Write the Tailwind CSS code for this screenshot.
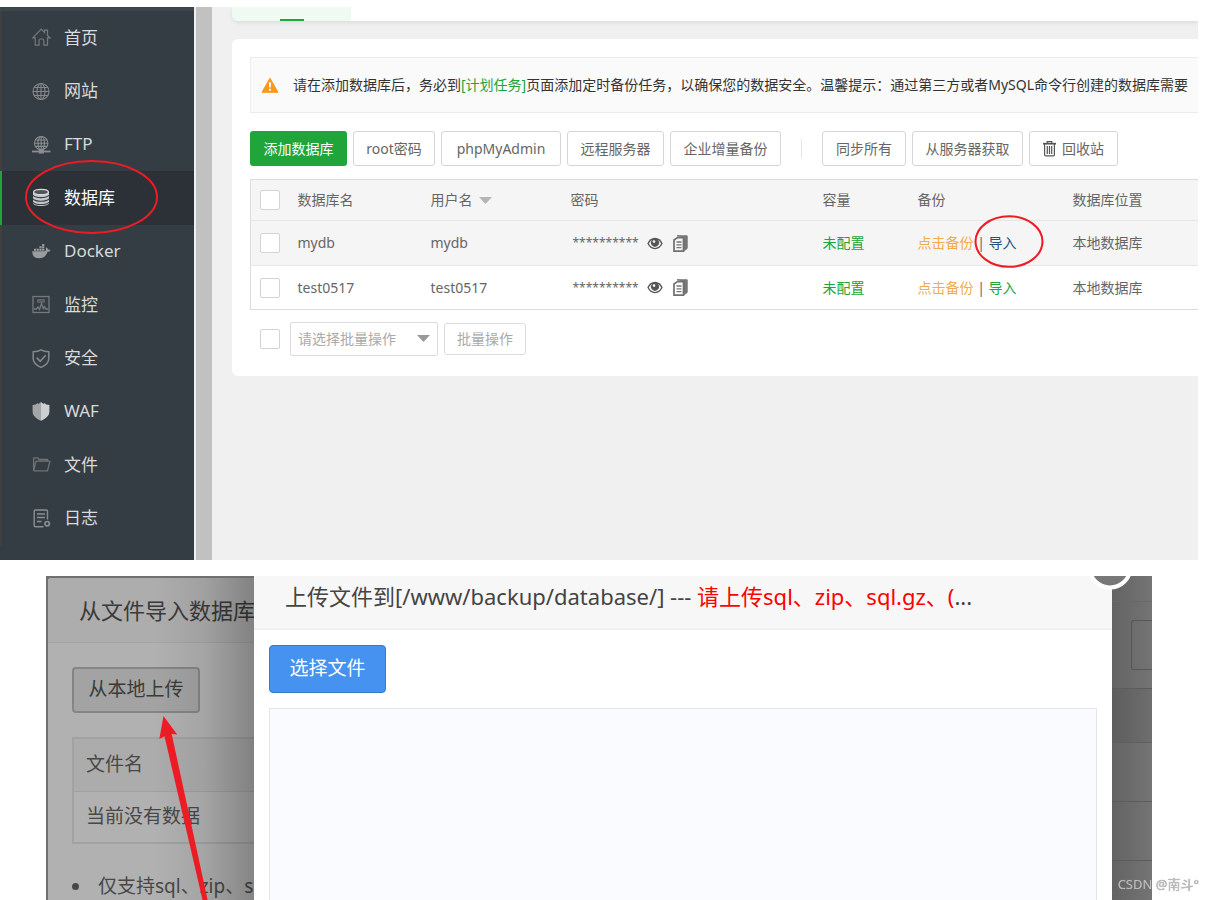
<!DOCTYPE html>
<html lang="zh-CN">
<head>
<meta charset="utf-8">
<meta name="viewport" content="width=device-width, initial-scale=1">
<title>数据库</title>
<script src="https://cdn.jsdelivr.net/npm/@tailwindcss/browser@4"></script>
</head>
<body class="bg-white font-['Noto_Sans','Noto_Sans_CJK_SC',sans-serif] text-sm text-[#666]">
<main class="flex h-screen flex-col overflow-hidden pt-[7px]">

  <!-- Panel -->
  <section class="mr-[15px] flex overflow-hidden bg-[#f0f0f0]">
    <nav class="w-[194px] shrink-0 border-t-4 border-[#3b454c] bg-[#353d44] pb-[15px] text-[17px] text-[#d8dadb]" aria-label="主菜单">
      <ul class="grid h-[534px] auto-rows-fr">
        <li class="border-l-2 border-[#423f3f]"><a href="#" class="flex h-full items-center gap-[13px] pl-[30px]">
          <svg class="size-[19px] text-[#75797c]" viewBox="0 0 19 19" fill="none" stroke="currentColor" stroke-width="1.2"><path d="M.8 9.8 9.2 1.2l3.3 3.4V2.2h3v5.3l2.4 2.3H15.500v7.400h-3.700v-4.700c0-1-.6-1.500-1.500-1.500H8.500c-1 0-1.500.5-1.500 1.500v4.700H3.200V9.800z"/></svg>首页</a></li>
        <li class="border-l-2 border-[#423f3f]"><a href="#" class="flex h-full items-center gap-[13px] pl-[30px]">
          <svg class="size-[19px] text-[#85888a]" viewBox="0 0 19 19" fill="none" stroke="currentColor" stroke-width="1.100"><circle cx="9" cy="9.500" r="8"/><ellipse cx="9" cy="9.500" rx="4" ry="8"/><path d="M9 1.500v16M1 9.500h16M2.200 5.500h13.600M2.200 13.500h13.600"/></svg>网站</a></li>
        <li class="border-l-2 border-[#423f3f]"><a href="#" class="flex h-full items-center gap-[13px] pl-[30px]">
          <svg class="size-[19px] text-[#8b8e90]" viewBox="0 0 19 19" fill="none" stroke="currentColor" stroke-width="1.100"><circle cx="9.200" cy="8.200" r="6.700"/><ellipse cx="9.200" cy="8.200" rx="3.200" ry="6.700"/><path d="M9.200 1.500v13M2.500 8.200h13.400M3.500 5h11.400M3.500 11.400h11.400"/><path d="M0 16.500h18.500" stroke-width="1.800"/><rect x="7.300" y="15" width="4" height="3" fill="currentColor"/></svg>FTP</a></li>
        <li class="relative border-l-2 border-[#20a53a] bg-[#2c3138] text-white"><a href="#" aria-current="page" class="flex h-full items-center gap-[13px] pl-[30px]">
          <svg class="size-[19px]" viewBox="0 0 19 19"><path d="M1 4v11c0 1.800 3.600 3 8 3s8-1.200 8-3V4z" fill="#c4c6c8"/><ellipse cx="9" cy="4" rx="7.400" ry="2.700" fill="#50555b" stroke="#d9dadc" stroke-width="1.300"/><path d="M1 7.400c1.500 1.500 4.500 2.200 8 2.200s6.500-.7 8-2.200M1 11c1.500 1.500 4.500 2.200 8 2.200s6.500-.7 8-2.200M1 14.300c1.500 1.500 4.500 2.200 8 2.200s6.500-.7 8-2.200" fill="none" stroke="#3d4249" stroke-width="1.100"/></svg>数据库</a>
          <svg class="pointer-events-none absolute -top-[11px] left-[23px] h-[74px] w-[134px]" viewBox="0 0 134 74" fill="none"><ellipse cx="66.500" cy="37" rx="65.500" ry="36" stroke="#ed1c24" stroke-width="2"/></svg></li>
        <li class="border-l-2 border-[#423f3f]"><a href="#" class="flex h-full items-center gap-[13px] pl-[30px]">
          <svg class="size-[19px] text-[#9a9c9e]" viewBox="0 0 19 19" fill="currentColor"><path d="M.3 9.300h12.400c1-.1 1.400-.7 1.200-1.700-.2-.9 0-1.700.7-2.300.9.700 1.300 1.400 1.300 2.200 1-.2 1.900 0 2.600.5-.5 1.300-1.500 1.800-3 1.800-1.200 4.200-4 6.500-8.300 6.500C2.500 16.300.2 14 .3 9.300zM2 6.700h2.200v2H2zM4.700 6.700h2.200v2H4.700zM7.400 6.700h2.200v2H7.400zM10.100 6.700h2.200v2h-2.200zM7.400 4.300h2.200v2H7.400zM10.100 4.300h2.200v2h-2.200zM10.100 2h2.200v1.900h-2.200z"/></svg>Docker</a></li>
        <li class="border-l-2 border-[#423f3f]"><a href="#" class="flex h-full items-center gap-[13px] pl-[30px]">
          <svg class="size-[19px] text-[#75797c]" viewBox="0 0 19 19" fill="none" stroke="currentColor" stroke-width="1.300"><rect x="1" y="1.500" width="16" height="16"/><path d="M5.500 4.500h7v2.800h-7z" fill="currentColor" fill-opacity=".5" stroke-width=".6"/><path d="M2 14h2.500l1.500-2 1.500 2.500 2-6 1.700 5 1.300-2 1.200 2.500H16"/></svg>监控</a></li>
        <li class="border-l-2 border-[#423f3f]"><a href="#" class="flex h-full items-center gap-[13px] pl-[30px]">
          <svg class="size-[19px] text-[#85888a]" viewBox="0 0 19 19" fill="none" stroke="currentColor" stroke-width="1.500"><path d="M9 .8c2 1.300 4.700 1.900 7.800 2v6.700c0 4-2.800 6.800-7.800 8.900-5-2.100-7.800-4.900-7.800-8.900V2.800c3.100-.1 5.800-.7 7.800-2z"/><path d="m4.700 8.700 3.500 3.600 5.500-6" stroke-width="1.700"/></svg>安全</a></li>
        <li class="border-l-2 border-[#423f3f]"><a href="#" class="flex h-full items-center gap-[13px] pl-[30px]">
          <svg class="size-[19px]" viewBox="0 0 19 19"><path d="M9 0 6.800 1.800 5.200 1.300 3.700 2.600.6 2.900v6.600c0 4.200 3.400 7 8.400 9.300z" fill="#a3a5a7"/><path d="m9 0 2.200 1.800 1.600-.5 1.500 1.300 3.100.3v6.600c0 4.200-3.400 7-8.400 9.300z" fill="#cdcfd0"/></svg>WAF</a></li>
        <li class="border-l-2 border-[#423f3f]"><a href="#" class="flex h-full items-center gap-[13px] pl-[30px]">
          <svg class="size-[19px] text-[#6f7376]" viewBox="0 0 19 19" fill="none" stroke="currentColor" stroke-width="1.300" stroke-linejoin="round"><path d="M1.600 16V2.800h4l1.600 1.700h8.300v1.700M1.600 16 4 6.200h13.900l-2.400 9.600H1.600"/></svg>文件</a></li>
        <li class="border-l-2 border-[#423f3f]"><a href="#" class="flex h-full items-center gap-[13px] pl-[30px]">
          <svg class="size-[19px] text-[#8b8e90]" viewBox="0 0 19 19" fill="none" stroke="currentColor" stroke-width="1.400" stroke-linejoin="round"><path d="M11.500 17.800H3.500c-.8 0-1.300-.5-1.300-1.300V2.300c0-.8.500-1.300 1.300-1.300h10.700c.8 0 1.300.5 1.300 1.300v8.200M5 5h8M5 8.500h8M5 12.500h4.500"/><circle cx="15.200" cy="14.700" r="2.200" stroke-width="1.700"/></svg>日志</a></li>
      </ul>
    </nav>
    <div class="w-0.5 shrink-0 bg-[#f0f0f0]"></div>
    <div class="w-4 shrink-0 bg-[#c1c1c1]"></div>

    <div class="min-w-0 flex-1 pl-5">
      <div class="h-[14px] rounded-bl-md bg-white shadow-[0_2px_4px_#00000014]">
        <div class="flex h-full w-[119px] items-end justify-center rounded-bl-md bg-[#effaf2]"><span class="h-0.5 w-6 bg-[#20a53a]"></span></div>
      </div>

      <div class="mt-[18px] rounded-l-md bg-white pb-5 pl-[18px] pt-[18px]">
        <div class="flex h-14 items-center gap-[14px] overflow-hidden whitespace-nowrap border border-r-0 border-[#ececec] bg-[#fafafa] pl-[10px] text-[#333]">
          <svg class="h-[17px] w-[18px] shrink-0" viewBox="0 0 18 17"><path d="M9 1.200 17 15.300H1z" fill="#f8981d" stroke="#f8981d" stroke-linejoin="round"/><path d="M7.800 5.500h2.400l-.5 5H8.300zM8 11.800h2v2H8z" fill="#fff"/></svg>
          <p>请在添加数据库后，务必到<a href="#" class="text-[#20a53a]">[计划任务]</a>页面添加定时备份任务，以确保您的数据安全。温馨提示：通过第三方或者MySQL命令行创建的数据库需要</p>
        </div>

        <div class="mt-[18px] flex items-center gap-1.5 whitespace-nowrap">
          <button class="h-[35px] w-[97px] rounded-[3px] bg-[#20a53a] text-white">添加数据库</button>
          <button class="h-[35px] w-[82px] rounded-[3px] border border-[#d6d6d6]">root密码</button>
          <button class="h-[35px] w-[120px] rounded-[3px] border border-[#d6d6d6]">phpMyAdmin</button>
          <button class="h-[35px] w-[97px] rounded-[3px] border border-[#d6d6d6]">远程服务器</button>
          <button class="h-[35px] w-[111px] rounded-[3px] border border-[#d6d6d6]">企业增量备份</button>
          <span class="mx-[14px] h-[19px] w-px bg-[#e6e6e6]"></span>
          <button class="h-[35px] w-[84px] rounded-[3px] border border-[#d6d6d6]">同步所有</button>
          <button class="h-[35px] w-[111px] rounded-[3px] border border-[#d6d6d6]">从服务器获取</button>
          <button class="flex h-[35px] w-[89px] items-center justify-center gap-1.5 rounded-[3px] border border-[#d6d6d6]">
            <svg class="h-4 w-[13px]" viewBox="0 0 13 16" fill="none" stroke="#555" stroke-width="1.200"><path d="M0 2.700h13" stroke-width="1.700"/><path d="M4.200 2.300V.6h4.600v1.700M1.600 3v10.700c0 .7.400 1.100 1.100 1.100h7.600c.7 0 1.100-.4 1.100-1.100V3M4.300 5v8M6.500 5v8M8.700 5v8"/></svg>回收站</button>
        </div>

        <table class="mt-[13px] w-full table-fixed border-b border-l border-t border-[#dcdcdc] text-left">
          <colgroup><col class="w-[47px]"><col class="w-[133px]"><col class="w-[140px]"><col class="w-[252px]"><col class="w-[95px]"><col class="w-[155px]"><col></colgroup>
          <thead>
            <tr class="h-[41px] border-b border-[#e6e6e6] bg-[#f5f5f5]">
              <th class="pl-[9px]"><input type="checkbox" aria-label="全选" class="block size-5 appearance-none rounded-[2px] border border-[#d4d4d4] bg-white"></th>
              <th class="font-normal">数据库名</th>
              <th class="font-normal"><span class="flex items-center gap-1.5">用户名<svg class="h-[7px] w-[13px]" viewBox="0 0 13 7"><path d="M0 0h13L6.500 7z" fill="#b5b5b5"/></svg></span></th>
              <th class="font-normal">密码</th>
              <th class="font-normal">容量</th>
              <th class="font-normal">备份</th>
              <th class="font-normal">数据库位置</th>
            </tr>
          </thead>
          <tbody>
            <tr class="h-[45px] border-b border-[#e6e6e6] bg-[#f5f5f5]">
              <td class="pl-[9px]"><input type="checkbox" aria-label="选择 mydb" class="block size-5 appearance-none rounded-[2px] border border-[#d4d4d4] bg-white"></td>
              <td>mydb</td>
              <td>mydb</td>
              <td><div class="flex items-center gap-2.5 pl-0.5"><span class="w-[64px] text-xs">**********</span>
                <button aria-label="显示密码"><svg class="block h-[13px] w-4" viewBox="0 0 16 13"><path d="M8 .8c3.500 0 6 2.200 7.700 5.700C14 10 11.500 12.200 8 12.200S2 10 .3 6.500C2 3 4.500.8 8 .8z" fill="#555"/><path d="M1.800 6.500c.9-1.700 2-2.900 3.300-3.600a4 4 0 1 0 5.800 0c1.300.7 2.400 1.900 3.300 3.600-1.500 2.900-3.600 4.400-6.200 4.400S3.300 9.400 1.800 6.500z" fill="#f5f5f5"/><circle cx="7" cy="4.600" r="1.300" fill="#f5f5f5"/></svg></button>
                <button aria-label="复制密码"><svg class="block h-[17px] w-[15px]" viewBox="0 0 15 17"><path d="M4 .8h10.200v12.700l-2.700 2V3L11 1.800z" fill="#777" stroke="#777"/><path d="M4.500 2.600 1 5v11.200h9.500V2.600z" fill="#f5f5f5" stroke="#707070" stroke-width="1.700"/><path d="M3.500 7h5M3.500 9.800h5M3.500 12.600h5" stroke="#777" stroke-width="1.300"/></svg></button></div></td>
              <td><a href="#" class="text-[#20a53a]">未配置</a></td>
              <td><div class="relative"><a href="#" class="text-[#f0ad4e]">点击备份</a> | <a href="#" class="text-[#23527c]">导入</a>
                <svg class="pointer-events-none absolute -top-[18px] left-[56px] h-[53px] w-[70px]" viewBox="0 0 70 53" fill="none"><ellipse cx="35" cy="26.500" rx="33.500" ry="25.300" stroke="#ed1c24" stroke-width="2"/></svg></div></td>
              <td>本地数据库</td>
            </tr>
            <tr class="h-[44px]">
              <td class="pl-[9px]"><input type="checkbox" aria-label="选择 test0517" class="block size-5 appearance-none rounded-[2px] border border-[#d4d4d4] bg-white"></td>
              <td>test0517</td>
              <td>test0517</td>
              <td><div class="flex items-center gap-2.5 pl-0.5"><span class="w-[64px] text-xs">**********</span>
                <button aria-label="显示密码"><svg class="block h-[13px] w-4" viewBox="0 0 16 13"><path d="M8 .8c3.500 0 6 2.200 7.700 5.700C14 10 11.500 12.200 8 12.200S2 10 .3 6.500C2 3 4.500.8 8 .8z" fill="#555"/><path d="M1.800 6.500c.9-1.700 2-2.900 3.300-3.600a4 4 0 1 0 5.800 0c1.300.7 2.400 1.900 3.300 3.600-1.500 2.900-3.600 4.400-6.200 4.400S3.300 9.400 1.800 6.500z" fill="#fff"/><circle cx="7" cy="4.600" r="1.300" fill="#fff"/></svg></button>
                <button aria-label="复制密码"><svg class="block h-[17px] w-[15px]" viewBox="0 0 15 17"><path d="M4 .8h10.200v12.700l-2.700 2V3L11 1.800z" fill="#777" stroke="#777"/><path d="M4.500 2.600 1 5v11.200h9.500V2.600z" fill="#fff" stroke="#707070" stroke-width="1.700"/><path d="M3.500 7h5M3.500 9.800h5M3.500 12.600h5" stroke="#777" stroke-width="1.300"/></svg></button></div></td>
              <td><a href="#" class="text-[#20a53a]">未配置</a></td>
              <td><a href="#" class="text-[#f0ad4e]">点击备份</a> | <a href="#" class="text-[#20a53a]">导入</a></td>
              <td>本地数据库</td>
            </tr>
          </tbody>
        </table>

        <div class="mt-3 flex items-center pl-2.5 text-[#aaa]">
          <input type="checkbox" aria-label="全选" class="size-5 appearance-none rounded-[2px] border border-[#d4d4d4] bg-white">
          <div class="relative ml-2.5">
            <select aria-label="批量操作" class="block h-[34px] w-[148px] appearance-none rounded-[2px] border border-[#dcdcdc] bg-white pl-[7px]"><option>请选择批量操作</option></select>
            <svg class="pointer-events-none absolute right-2 top-[13px] h-[7px] w-[13px]" viewBox="0 0 13 7"><path d="M0 0h13L6.500 7z" fill="#999"/></svg>
          </div>
          <button class="ml-1.5 h-8 w-[82px] rounded-[3px] border border-[#dcdcdc]">批量操作</button>
        </div>
      </div>
    </div>
  </section>

  <!-- Upload dialog over the import dialog -->
  <section class="relative ml-[46px] mr-[61px] mt-4 flex min-h-0 flex-1 overflow-hidden bg-[#707070]">
    <div class="relative ml-0.5 mt-0.5 w-[206px] shrink-0 overflow-hidden whitespace-nowrap rounded-tl-[3px] bg-[#b1b1b1] text-[19px] text-[#484848]">
      <h2 class="flex h-[65px] items-center border-b border-[#a4a4a4] bg-[#adadad] pl-[31px] pt-0.5 text-[22px] text-[#3a3a3a]">从文件导入数据库</h2>
      <div class="pl-6 pt-6">
        <button class="h-[46px] w-[128px] rounded-[4px] border-2 border-[#858585] bg-[#a3a3a3] text-[#3a3a3a]">从本地上传</button>
        <table class="mt-6 w-[400px] border-2 border-[#a2a2a2] text-left">
          <thead><tr class="h-[53px] border-b border-[#a0a0a0] bg-[#acacac]"><th class="pl-3 font-normal">文件名</th></tr></thead>
          <tbody><tr class="h-[52px]"><td class="pl-3">当前没有数据</td></tr></tbody>
        </table>
        <ul class="mt-[29px]"><li class="flex items-center gap-[19px]"><span class="size-[7px] shrink-0 rounded-full bg-[#484848]"></span>仅支持sql、zip、s</li></ul>
      </div>
      <div class="pointer-events-none absolute inset-y-0 right-0 w-[100px] bg-linear-to-r from-black/0 via-black/7 to-black/25"></div>
    </div>

    <div class="relative z-10 flex min-w-0 flex-1 flex-col bg-white">
      <h2 class="h-[54px] shrink-0 truncate border-b-2 border-[#f0f0f0] bg-[#f7f7f7] pl-[31px] pr-[120px] text-[22px] leading-10 text-[#444]">上传文件到[/www/backup/database/] --- <span class="text-[#f00]">请上传sql、zip、sql.gz、(</span>...</h2>
      <svg class="absolute -top-8 right-[-21px] size-[46px]" viewBox="0 0 46 46"><circle cx="23" cy="23" r="20.500" fill="#787878" stroke="#fff" stroke-width="4"/></svg>
      <div class="flex min-h-0 flex-1 flex-col px-[15px] pt-[15px]">
        <button class="h-12 w-[117px] shrink-0 rounded-[4px] border border-[#357ebd] bg-[#4592f0] text-[19px] text-white">选择文件</button>
        <div class="mt-[15px] flex-1 border border-b-0 border-[#e4e5e8] bg-[#fafbff]"></div>
      </div>
    </div>

    <div class="flex w-10 shrink-0 flex-col bg-linear-to-r from-[#636363] to-[#747474]">
      <div class="h-[26px] border-b border-[#696969]"></div>
      <div class="flex h-[87px] items-center justify-end border-b border-[#5c5c5c]"><span class="h-[50px] w-[21px] rounded-l-[3px] border border-r-0 border-[#565656]"></span></div>
      <div class="h-[54px] border-b border-[#5f5f5f] bg-black/5"></div>
      <div class="h-[59px] border-b border-[#5c5c5c]"></div>
      <div class="h-[59px] border-b border-[#5c5c5c]"></div>
    </div>

    <svg class="pointer-events-none absolute left-[108px] top-[138px] z-20 h-[190px] w-[60px]" viewBox="0 0 60 190"><path d="M9.500 2 23.200 20.500l-5.500-.5L54.500 190h-5L10.500 22.300l-5.200 2.700z" fill="#ed1c24"/></svg>
  </section>
  <p class="fixed bottom-2 right-[14px] z-30 text-[13px] leading-4 text-[#bdbdbd] [text-shadow:0_0_1px_#888]">CSDN @南斗°</p>
</main>
</body>
</html>
